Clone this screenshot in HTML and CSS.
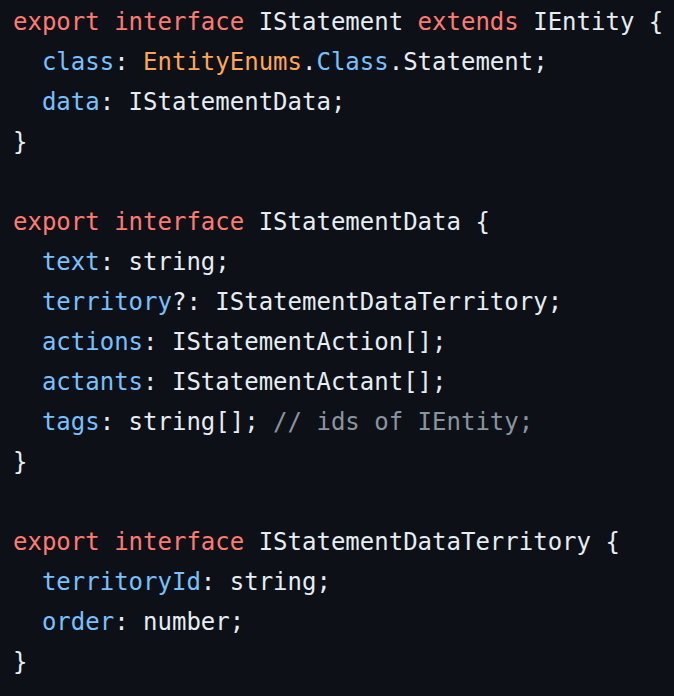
FILE: index.html
```html
<!DOCTYPE html>
<html>
<head>
<meta charset="utf-8">
<link rel="stylesheet" href="styles.css">
</head>
<body>
<div class="code">
<div class="line"><span class="k">export</span> <span class="k">interface</span> IStatement <span class="k">extends</span> IEntity {</div>
<div class="line">  <span class="p">class</span>: <span class="o">EntityEnums</span>.<span class="p">Class</span>.Statement;</div>
<div class="line">  <span class="p">data</span>: IStatementData;</div>
<div class="line">}</div>
<div class="line"> </div>
<div class="line"><span class="k">export</span> <span class="k">interface</span> IStatementData {</div>
<div class="line">  <span class="p">text</span>: string;</div>
<div class="line">  <span class="p">territory</span>?: IStatementDataTerritory;</div>
<div class="line">  <span class="p">actions</span>: IStatementAction[];</div>
<div class="line">  <span class="p">actants</span>: IStatementActant[];</div>
<div class="line">  <span class="p">tags</span>: string[]; <span class="c">// ids of IEntity;</span></div>
<div class="line">}</div>
<div class="line"> </div>
<div class="line"><span class="k">export</span> <span class="k">interface</span> IStatementDataTerritory {</div>
<div class="line">  <span class="p">territoryId</span>: string;</div>
<div class="line">  <span class="p">order</span>: number;</div>
<div class="line">}</div>
</div>
</body>
</html>
```
FILE: styles.css
```css
html, body {
  margin: 0;
  padding: 0;
  background: #0d1117;
}
.code {
  display: flex;
  flex-direction: column;
  padding: 2px 0 0 13px;
  font-family: "DejaVu Sans Mono", monospace;
  font-size: 24px;
  color: #e6edf3;
  background: #0d1117;
  min-height: 696px;
  box-sizing: border-box;
}
.line {
  height: 40px;
  line-height: 40px;
  white-space: pre;
}
.k { color: #ff7b72; }
.p { color: #79c0ff; }
.o { color: #ffa657; }
.c { color: #8b949e; }
```
